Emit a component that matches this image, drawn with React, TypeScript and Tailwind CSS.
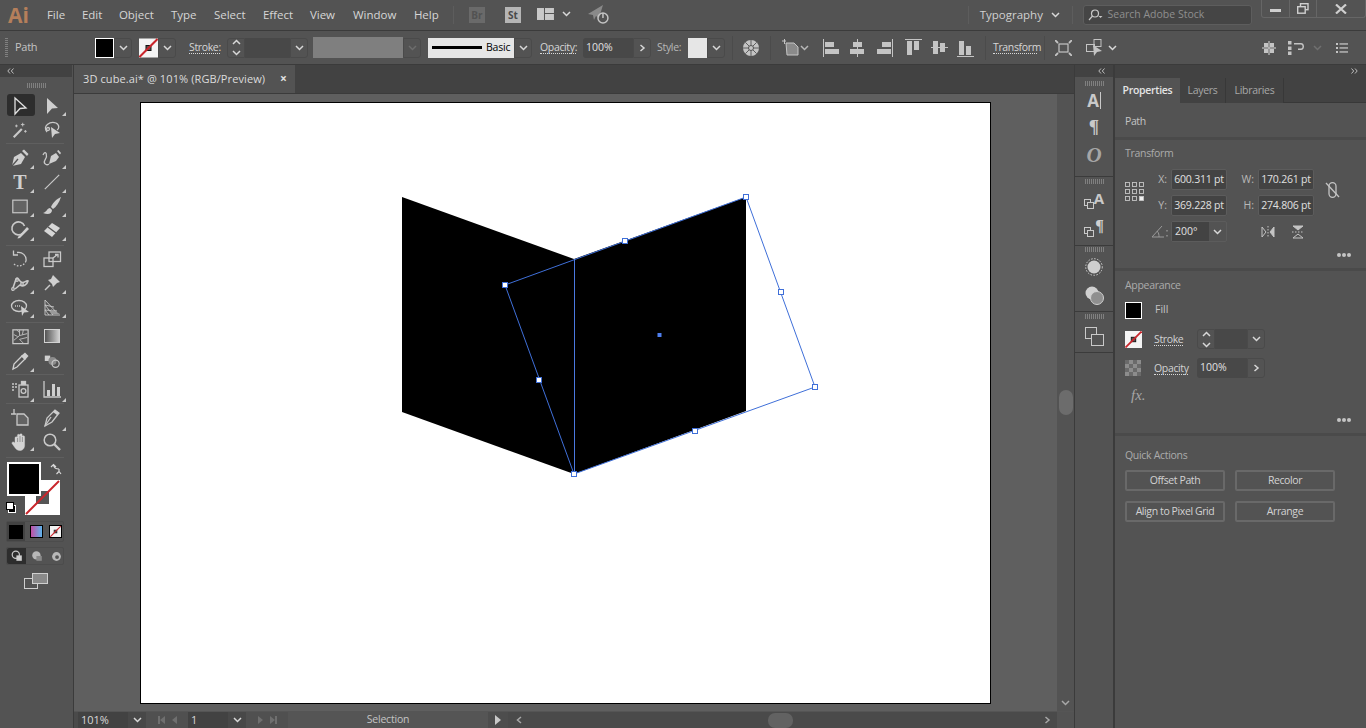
import type { ReactNode } from "react";

const menus = [
  { label: "File", width: "w-[35px]" },
  { label: "Edit", width: "w-[37px]" },
  { label: "Object", width: "w-[52px]" },
  { label: "Type", width: "w-[43px]" },
  { label: "Select", width: "w-[49px]" },
  { label: "Effect", width: "w-[47px]" },
  { label: "View", width: "w-[43px]" },
  { label: "Window", width: "w-[61px]" },
  { label: "Help", width: "w-[40px]" }
];

function Ico({ size = 18, box = 20, className = "", children }: { size?: number; box?: number; className?: string; children: ReactNode }) {
  return (
    <svg width={size} height={size} viewBox={`0 0 ${box} ${box}`} className={`shrink-0 ${className}`} fill="none" stroke="#c9c9c9" strokeWidth="1.3">
      {children}
    </svg>
  );
}

function Chev({ dir = "down", color = "#d8d8d8" }: { dir?: "down" | "up" | "right" | "left"; color?: string }) {
  const points = { down: "1,2 4.5,5.5 8,2", up: "1,6 4.5,2.5 8,6", right: "2.5,1 6,4 2.5,7", left: "6,1 2.5,4 6,7" }[dir];
  return (
    <svg width="9" height="8" viewBox="0 0 9 8" className="shrink-0" fill="none" stroke={color} strokeWidth="1.5">
      <polyline points={points} />
    </svg>
  );
}

function DoubleChev({ dir }: { dir: "left" | "right" }) {
  return (
    <svg width="7" height="6" viewBox="0 0 7 6" fill="none" stroke="#bdbdbd" strokeWidth="1">
      <path d={dir === "left" ? "M3 0.5 L0.8 3 L3 5.5 M6.5 0.5 L4.3 3 L6.5 5.5" : "M0.5 0.5 L2.7 3 L0.5 5.5 M4 0.5 L6.2 3 L4 5.5"} />
    </svg>
  );
}

function ChevBox({ dir = "down", color, className = "" }: { dir?: "down" | "right"; color?: string; className?: string }) {
  return (
    <div className={`flex h-[20px] w-[18px] shrink-0 items-center justify-center rounded-r-[3px] border border-[#4a4a4a] ${className}`}>
      <Chev dir={dir} color={color} />
    </div>
  );
}

function Spinner() {
  return (
    <div className="flex h-[20px] w-[18px] shrink-0 flex-col items-center justify-center gap-[3px] rounded-l-[3px] border border-[#4a4a4a]">
      <Chev dir="up" />
      <Chev dir="down" />
    </div>
  );
}

function NoneSwatch({ className = "" }: { className?: string }) {
  return (
    <svg viewBox="0 0 19 19" className={`shrink-0 ${className}`}>
      <rect width="19" height="19" fill="#f4f4f4" />
      <rect x="7" y="7" width="5" height="5" fill="#555" stroke="#111" />
      <line x1="0.5" y1="18.5" x2="18.5" y2="0.5" stroke="#c9252b" strokeWidth="2" />
    </svg>
  );
}

function Gripper({ className = "" }: { className?: string }) {
  return <div className={`h-[5px] w-[19px] bg-[repeating-linear-gradient(90deg,#808080_0,#808080_1px,transparent_1px,transparent_2px)] ${className}`} />;
}

function Corner() {
  return <span className="absolute right-[2px] bottom-[1px] h-0 w-0 border-b-[4px] border-l-[4px] border-b-[#c9c9c9] border-l-transparent" />;
}

function Tool({ corner = false, active = false, children }: { corner?: boolean; active?: boolean; children: ReactNode }) {
  return (
    <div className="relative flex h-full w-[32px] items-center justify-center">
      {active ? <span className="absolute top-0 left-[3px] h-[22px] w-[28px] rounded-[3px] bg-[#2d2d2d]" /> : null}
      <span className="relative flex items-center justify-center">{children}</span>
      {corner ? <Corner /> : null}
    </div>
  );
}

function ToolRow({ height, children }: { height: string; children: ReactNode }) {
  return <div className={`flex pl-[4px] ${height}`}>{children}</div>;
}

function Sep() {
  return <div className="mx-[6px] h-px w-[58px] bg-[#5f5f5f]" />;
}

function LeftToolbar() {
  return (
    <aside className="flex w-[72px] shrink-0 flex-col bg-[#535353]">
      <div className="flex h-[12px] items-center bg-[#424242] pl-[7px]">
        <DoubleChev dir="left" />
      </div>
      <div className="flex h-[17px] items-center justify-center">
        <Gripper />
      </div>
      <ToolRow height="h-[23px]">
        <Tool active>
          <Ico size={20}><path d="M5 2 L16 12 L10 12.5 L5 18 Z" fill="none" stroke="#e0e0e0" /></Ico>
        </Tool>
        <Tool corner>
          <Ico size={20}><path d="M5 2 L16 12 L10 12.5 L5 18 Z" fill="#cfcfcf" stroke="none" /></Ico>
        </Tool>
      </ToolRow>
      <ToolRow height="h-[26px]">
        <Tool>
          <Ico><path d="M3 18 L12 9" strokeWidth="2.4" /><path d="M13 2v4M11 4h4M6 4v3M4.5 5.5h3M16 10v3M14.5 11.5h3" strokeWidth="1" /></Ico>
        </Tool>
        <Tool>
          <Ico size={20}><path d="M5 12 C0 6 8 1 14 3 C18 5 17 9 15 10" /><circle cx="6" cy="9" r="1.5" /><path d="M9 7 L18 13 L13 14 L10 18 Z" fill="#cfcfcf" stroke="none" /></Ico>
        </Tool>
      </ToolRow>
      <Sep />
      <div className="h-[2px]" />
      <ToolRow height="h-[24px]">
        <Tool corner>
          <Ico size={20}><path d="M2 18 L4 9 L11 5 L15 9 L11 16 Z" fill="#cfcfcf" stroke="none" /><path d="M12 3 L14 1.5 L18.5 6 L17 8 Z" fill="#cfcfcf" stroke="none" /><path d="M2 18 L8 11" stroke="#535353" /></Ico>
        </Tool>
        <Tool corner>
          <Ico size={20}><path d="M1 7 C4 1 6 8 3 12 C1 15 4 18 7 16" /><path d="M7 16 L9 8 L14 5 L17 9 L14 13 Z" fill="#cfcfcf" stroke="none" /><path d="M15 3 L16.5 2 L19 5 L18 6.5 Z" fill="#cfcfcf" stroke="none" /></Ico>
        </Tool>
      </ToolRow>
      <ToolRow height="h-[24px]">
        <Tool corner><span className="font-['Liberation_Serif',serif] text-[20px] leading-none font-bold text-[#cfcfcf]">T</span></Tool>
        <Tool corner><Ico><path d="M2 18 L18 2" strokeWidth="1.3" /></Ico></Tool>
      </ToolRow>
      <ToolRow height="h-[24px]">
        <Tool corner><Ico><rect x="2" y="3.5" width="16" height="14" fill="#636363" /></Ico></Tool>
        <Tool corner>
          <Ico size={20}><path d="M19 1 C14 3 10 8 9 11 L11 13 C14 11 17 7 19 1 Z" fill="#cfcfcf" stroke="none" /><path d="M8 12 C5 12 5 16 1 17 C6 19 10 18 10 14 Z" fill="#cfcfcf" stroke="none" /></Ico>
        </Tool>
      </ToolRow>
      <ToolRow height="h-[24px]">
        <Tool corner><Ico size={20}><path d="M13 13 A 6.5 6.5 0 1 1 14.5 6" strokeWidth="1.6" /><path d="M8 17 L17 7 L19 9 L10 18 L7.5 18.5 Z" fill="#cfcfcf" stroke="none" /></Ico></Tool>
        <Tool corner><Ico size={20}><path d="M2 11 L10 3 L18 8 L10 17 Z" fill="#d6d6d6" stroke="none" /><path d="M6 7 L14 13" stroke="#535353" /></Ico></Tool>
      </ToolRow>
      <div className="h-[3px]" />
      <Sep />
      <ToolRow height="h-[25px]">
        <Tool corner><Ico size={20}><path d="M7 3.5 A 7.5 7.5 0 0 1 16 12" /><path d="M16 12 A 7.5 7.5 0 0 1 3 14" strokeDasharray="1.6 1.6" /><path d="M3.5 1.5 L3.5 6 L8 6" /></Ico></Tool>
        <Tool><Ico size={20}><rect x="2" y="9" width="9" height="8.5" /><rect x="7" y="3" width="11.5" height="9.5" /><path d="M11 9 L15.5 5.5 M13 5.5h3v3" /></Ico></Tool>
      </ToolRow>
      <ToolRow height="h-[24px]">
        <Tool corner><Ico size={20}><path d="M3 15 L6 6 C8 3 9 8 11 9 C14 11 16 7 18 8 C17 12 13 14 10 12 L5 16" strokeWidth="1.6" /><circle cx="7" cy="7" r="1.3" /><circle cx="3" cy="16" r="1.3" /><circle cx="12" cy="11" r="1.3" /></Ico></Tool>
        <Tool corner><Ico size={20}><path d="M11 2 L18 9 L15 10 L11 14 L10 11 L6 7 L9 6 Z" fill="#cfcfcf" stroke="none" /><path d="M8 12 L3 17" strokeWidth="1.5" /></Ico></Tool>
      </ToolRow>
      <ToolRow height="h-[24px]">
        <Tool corner><Ico size={20}><ellipse cx="9" cy="9" rx="7.5" ry="5.5" /><path d="M5 9h6" strokeDasharray="1 1" /><path d="M11 9 L19 15 L14 15.5 L12 19 Z" fill="#cfcfcf" stroke="none" /></Ico></Tool>
        <Tool corner><Ico size={20}><path d="M3 3 V18 H18 M3 3 L16 17 M3 8 L11 18 M3 13 L7 18 M3 8 L12 10 M3 13 L15 14" strokeWidth="0.9" /><path d="M9 12 L18 17 H9 Z" fill="#9a9a9a" stroke="none" /></Ico></Tool>
      </ToolRow>
      <div className="h-[3px]" />
      <Sep />
      <ToolRow height="h-[26px]">
        <Tool><Ico size={19}><rect x="2" y="3" width="16" height="14.5" /><path d="M3 14 L9 9 L9 3 M9 9 L17 7 M6 3 L9 6 M13 3 L12 8 M9 13 L13 17 M9 13 L17 11 M3 8 L7 10" strokeWidth="0.9" /></Ico></Tool>
        <Tool>
          <div className="h-[14px] w-[16px] border border-[#d2d2d2] bg-[linear-gradient(90deg,#545454,#cfcfcf)]" />
        </Tool>
      </ToolRow>
      <ToolRow height="h-[24px]">
        <Tool corner><Ico size={20}><path d="M3 18 L4 13 L12 5 L15 8 L7 16 Z" stroke="#cfcfcf" /><path d="M11 5 L15 1.5 L18.5 5 L15 9 Z" fill="#cfcfcf" stroke="none" /></Ico></Tool>
        <Tool><Ico><rect x="2" y="4" width="6" height="6" fill="#cfcfcf" stroke="none" /><circle cx="10.5" cy="10" r="4.5" fill="#8c8c8c" stroke="none" /><circle cx="14" cy="13" r="4" /></Ico></Tool>
      </ToolRow>
      <div className="h-px" />
      <Sep />
      <ToolRow height="h-[28px]">
        <Tool corner><Ico size={20}><path d="M2 5h2M5 5h2M2 8h2M5 8h2M2 11h2" strokeWidth="1.5" /><rect x="9" y="6" width="9" height="12" /><circle cx="13.5" cy="12" r="2.4" /><rect x="11.5" y="2.5" width="4" height="3" fill="#cfcfcf" /></Ico></Tool>
        <Tool corner><Ico size={20}><path d="M2 2 V18 H19" /><rect x="5" y="11" width="3" height="6" fill="#cfcfcf" stroke="none" /><rect x="10" y="5" width="3" height="12" fill="#cfcfcf" stroke="none" /><rect x="15" y="8" width="3" height="9" fill="#cfcfcf" stroke="none" /></Ico></Tool>
      </ToolRow>
      <Sep />
      <ToolRow height="h-[28px]">
        <Tool><Ico size={20}><path d="M1 6h5M4 1v5" /><path d="M7 6 H14 L18 10 V17 H7 Z" fill="#636363" /></Ico></Tool>
        <Tool corner><Ico size={20}><path d="M3 18 L5 10 L13 2 L17 5 L10 14 Z" /><path d="M3 18 L9 9" /><path d="M13 2 L17 5 L15 7 L11 4 Z" fill="#cfcfcf" stroke="none" /></Ico></Tool>
      </ToolRow>
      <ToolRow height="h-[20px]">
        <Tool corner>
          <Ico size={20}>
            <path d="M5 11 V6 a1.2 1.2 0 0 1 2.4 0 V10 V3.5 a1.2 1.2 0 0 1 2.4 0 V10 V3 a1.2 1.2 0 0 1 2.4 0 V10 V5 a1.2 1.2 0 0 1 2.4 0 V12 C15 16 13 18.5 10 18.5 C7 18.5 6 17 4.5 15 L2 11.5 C1.5 10 3.5 9 5 11 Z" fill="#d4d4d4" stroke="#d4d4d4" strokeWidth="0.4" />
            <path d="M7.6 6 V10 M10 4 V10 M12.4 5 V10" stroke="#535353" strokeWidth="0.5" />
          </Ico>
        </Tool>
        <Tool><Ico size={20}><circle cx="8" cy="8" r="5.8" strokeWidth="1.5" /><path d="M12 12 L18 18" strokeWidth="2.4" /></Ico></Tool>
      </ToolRow>
      <div className="h-[5px]" />
      <Sep />
      <div className="relative h-[58px] w-full">
        <div className="absolute top-[4px] left-[7px] z-10 h-[34px] w-[34px] border-2 border-white bg-black" />
        <svg width="35" height="35" viewBox="0 0 35 35" className="absolute top-[22px] left-[25px]">
          <rect width="35" height="35" fill="#fff" />
          <rect x="11" y="11" width="13" height="13" fill="#555" />
          <line x1="1" y1="34" x2="34" y2="1" stroke="#c9252b" strokeWidth="2" />
        </svg>
        <svg width="12" height="12" viewBox="0 0 12 12" className="absolute top-[5px] left-[50px]" fill="none" stroke="#d8d8d8" strokeWidth="1.2">
          <path d="M1 4 L3.5 1.5 L6 4 M3.5 2 C4 5 6 6 9 6 M6.5 11 L9 8.5 L11 11 M9 9 V6" />
        </svg>
        <div className="absolute top-[47px] left-[8px] h-[8px] w-[8px] border border-white bg-black" />
        <div className="absolute top-[44px] left-[6px] h-[8px] w-[8px] border border-black bg-white" />
      </div>
      <div className="mx-[6px] mt-[5px] flex h-[21px] w-[58px] shrink-0 items-center rounded-[2px] border border-[#4c4c4c]">
        <div className="flex h-full w-[18px] items-center justify-center bg-[#434343]">
          <div className="h-[14px] w-[14px] border border-black bg-black" />
        </div>
        <div className="ml-[5px] h-[13px] w-[13px] border border-black bg-[linear-gradient(90deg,#c34fa5,#5db4ec)]" />
        <NoneSwatch className="ml-[6px] h-[13px] w-[13px] border border-black" />
      </div>
      <div className="mx-[6px] mt-[5px] flex h-[18px] w-[58px] shrink-0 items-center rounded-[2px] border border-[#4c4c4c]">
        <div className="flex h-full w-[19px] items-center justify-center rounded-l-[2px] bg-[#2d2d2d]">
          <Ico size={12}><circle cx="8" cy="8" r="6" strokeWidth="2" /><rect x="9" y="9" width="9" height="9" fill="#cfcfcf" stroke="none" /></Ico>
        </div>
        <div className="ml-[4px] flex w-[14px] justify-center">
          <Ico size={12}><circle cx="9" cy="9" r="7" fill="#b8b8b8" stroke="none" /><rect x="9" y="10" width="9" height="8" fill="#8a8a8a" stroke="none" /></Ico>
        </div>
        <div className="ml-[6px] flex w-[12px] justify-center">
          <Ico size={11}><circle cx="10" cy="10" r="8" fill="#b8b8b8" stroke="none" /><circle cx="11" cy="11" r="3.5" fill="#535353" stroke="none" /></Ico>
        </div>
      </div>
      <div className="mt-[8px] flex justify-center">
        <svg width="24" height="16" viewBox="0 0 24 16" fill="none" stroke="#cfcfcf">
          <rect x="0.5" y="5.5" width="13" height="10" />
          <rect x="8.5" y="0.5" width="15" height="10" fill="#8a8a8a" />
        </svg>
      </div>
    </aside>
  );
}

function MenuBar() {
  return (
    <div className="flex h-[31px] shrink-0 items-center border-b border-[#3b3b3b] bg-[#535353] text-[11.5px] text-[#d6d6d6]">
      <span className="ml-[8px] w-[39px] text-[21px] leading-none font-bold text-[#b57f5b]">Ai</span>
      {menus.map((menu) => (
        <span key={menu.label} className={`${menu.width} shrink-0`}>
          {menu.label}
        </span>
      ))}
      <div className="ml-[-1px] h-[18px] w-px bg-[#5d5d5d]" />
      <div className="ml-[15px] flex h-[16px] w-[16px] items-center justify-center bg-[#6a6a6a] text-[10px] font-bold text-[#525252]">Br</div>
      <div className="ml-[20px] flex h-[16px] w-[16px] items-center justify-center bg-[#b5b5b5] text-[10px] font-bold text-[#4a4a4a]">St</div>
      <svg width="17" height="12" viewBox="0 0 17 12" className="mb-[3px] ml-[16px]" fill="#c9c9c9">
        <rect width="7" height="12" />
        <rect x="8" width="9" height="5" />
        <rect x="8" y="6" width="9" height="6" />
      </svg>
      <div className="mb-[3px] ml-[8px]"><Chev /></div>
      <svg width="22" height="20" viewBox="0 0 22 20" className="ml-[17px]" fill="#8a8a8a">
        <path d="M0 9 L15 0 L11 13 L8 11 L6 15 L5 10 Z" />
        <circle cx="15" cy="13" r="5" fill="none" stroke="#c4c4c4" strokeWidth="1.5" />
        <path d="M15 8 V13" stroke="#c4c4c4" strokeWidth="1.5" />
      </svg>
      <div className="ml-[358px] h-[18px] w-px bg-[#5d5d5d]" />
      <span className="ml-[11px] w-[72px] text-[11.5px] text-[#d0d0d0]">Typography</span>
      <Chev />
      <div className="ml-[12px] h-[18px] w-px bg-[#5d5d5d]" />
      <div className="ml-[10px] flex h-[20px] w-[169px] items-center rounded-[3px] border border-[#5d5d5d] bg-[#454545] pl-[4px] text-[#8f8f8f]">
        <svg width="15" height="12" viewBox="0 0 15 12" fill="none" stroke="#c9c9c9" strokeWidth="1.2" className="shrink-0">
          <circle cx="7" cy="4.5" r="3.5" />
          <path d="M4.5 7 L1 11" />
          <path d="M10.5 7 h4 l-2 2 Z" fill="#c9c9c9" stroke="none" />
        </svg>
        <span className="ml-[4px] text-[10.5px]">Search Adobe Stock</span>
      </div>
      <div className="mb-[12px] ml-[9px] flex h-[18px] w-[105px] shrink-0 rounded-b-[3px] border-x border-b border-[#666]">
        <div className="flex w-[28px] items-center justify-center border-r border-[#666]"><div className="mt-[3px] h-[3px] w-[11px] bg-[#cfcfcf]" /></div>
        <div className="flex w-[27px] items-center justify-center border-r border-[#666]">
          <svg width="12" height="11" viewBox="0 0 12 11" fill="none" stroke="#cfcfcf" strokeWidth="1.4"><rect x="3.5" y="0.7" width="7.5" height="6" /><rect x="0.7" y="3.7" width="7.5" height="6.5" fill="#535353" /></svg>
        </div>
        <div className="flex flex-1 items-center justify-center">
          <svg width="12" height="10" viewBox="0 0 12 10" stroke="#cfcfcf" strokeWidth="2.2"><path d="M1 0.5 L11 9.5 M11 0.5 L1 9.5" /></svg>
        </div>
      </div>
    </div>
  );
}

function Dotted({ className = "", children }: { className?: string; children: ReactNode }) {
  return <span className={`shrink-0 border-b border-dotted border-[#d8d8d8] text-[10.5px] leading-[12px] font-medium tracking-[-0.35px] whitespace-nowrap ${className}`}>{children}</span>;
}

function Bars({ children, className = "" }: { children: ReactNode; className?: string }) {
  return (
    <svg width="17" height="18" viewBox="0 0 17 18" className={`shrink-0 ${className}`} fill="#c4c4c4" stroke="none">
      {children}
    </svg>
  );
}

function ControlBar() {
  return (
    <div className="flex h-[34px] shrink-0 items-center border-b border-[#3b3b3b] bg-[#535353] text-[11px] text-[#d6d6d6]">
      <div className="ml-[5px] h-[19px] w-[3px] bg-[repeating-linear-gradient(0deg,#808080_0,#808080_1px,transparent_1px,transparent_2px)]" />
      <span className="ml-[7px] w-[43px] font-medium tracking-[-0.3px] text-[#c4c4c4]">Path</span>
      <div className="ml-[37px] h-[20px] w-[19px] border border-white bg-black" />
      <ChevBox />
      <NoneSwatch className="ml-[7px] h-[20px] w-[19px]" />
      <ChevBox />
      <Dotted className="ml-[13px] w-[31px]">Stroke:</Dotted>
      <div className="ml-[7px]"><Spinner /></div>
      <div className="h-[20px] w-[45px] bg-[#484848]" />
      <ChevBox />
      <div className="ml-[5px] h-[21px] w-[90px] bg-[#7f7f7f]" />
      <ChevBox color="#6d6d6d" />
      <div className="ml-[7px] flex h-[20px] w-[86px] items-center bg-[#e6e6e6] pl-[4px] text-[10.5px] tracking-[-0.2px] text-black">
        <div className="h-[3px] w-[50px] bg-black" />
        <span className="ml-[4px]">Basic</span>
      </div>
      <ChevBox />
      <Dotted className="ml-[8px] w-[36px]">Opacity:</Dotted>
      <div className="ml-[7px] flex h-[20px] w-[50px] items-center rounded-l-[3px] bg-[#484848] pl-[3px] text-[10.5px] text-[#e0e0e0]">100%</div>
      <ChevBox dir="right" />
      <span className="ml-[6px] w-[24px] text-[10.5px] font-medium tracking-[-0.3px] whitespace-nowrap text-[#b8b8b8]">Style:</span>
      <div className="ml-[7px] h-[20px] w-[19px] bg-[#e6e6e6]" />
      <ChevBox />
      <div className="ml-[7px] h-[24px] w-px bg-[#4b4b4b]" />
      <svg width="16" height="16" viewBox="0 0 16 16" className="ml-[10px] shrink-0" fill="#c4c4c4" stroke="#535353">
        <circle cx="8" cy="8" r="8" stroke="none" />
        <circle cx="8" cy="8" r="2.5" />
        <path d="M8 0V5.5M8 10.5V16M0 8H5.5M10.5 8H16M2.3 2.3L6 6M10 10L13.7 13.7M13.7 2.3L10 6M6 10L2.3 13.7" strokeWidth="0.9" />
      </svg>
      <div className="ml-[11px] h-[24px] w-px bg-[#4b4b4b]" />
      <svg width="18" height="17" viewBox="0 0 18 17" className="ml-[11px] shrink-0" fill="none" stroke="#c4c4c4">
        <path d="M0 2h4M2.5 0v5" />
        <path d="M4 4 H12 L16 8 V16 H5 Z" fill="#8a8a8a" />
      </svg>
      <Chev color="#b8b8b8" />
      <Bars className="ml-[14px]">
        <rect x="0" y="0" width="1" height="18" />
        <rect x="2" y="3" width="9" height="5" />
        <rect x="2" y="10" width="14" height="5" />
      </Bars>
      <Bars className="ml-[9px]">
        <rect x="8" y="0" width="1" height="18" />
        <rect x="4" y="3" width="9" height="5" />
        <rect x="1" y="10" width="14" height="5" />
      </Bars>
      <Bars className="ml-[10px]">
        <rect x="16" y="0" width="1" height="18" />
        <rect x="6" y="3" width="9" height="5" />
        <rect x="1" y="10" width="14" height="5" />
      </Bars>
      <Bars className="ml-[12px]">
        <rect x="0" y="0" width="17" height="1" />
        <rect x="2" y="2" width="5" height="14" />
        <rect x="9" y="2" width="5" height="9" />
      </Bars>
      <Bars className="ml-[9px]">
        <rect x="0" y="8" width="17" height="1" />
        <rect x="2" y="2" width="5" height="13" />
        <rect x="9" y="4" width="5" height="9" />
      </Bars>
      <Bars className="ml-[9px]">
        <rect x="0" y="17" width="17" height="1" />
        <rect x="2" y="2" width="5" height="14" />
        <rect x="9" y="7" width="5" height="9" />
      </Bars>
      <div className="ml-[11px] h-[24px] w-px bg-[#4b4b4b]" />
      <Dotted className="ml-[7px] w-[44px] tracking-[-0.5px]">Transform</Dotted>
      <div className="ml-[7px] h-[24px] w-px bg-[#4b4b4b]" />
      <svg width="17" height="16" viewBox="0 0 17 16" className="ml-[10px] shrink-0" fill="none" stroke="#c4c4c4" strokeWidth="1.2">
        <rect x="4" y="4" width="9" height="8" />
        <path d="M0 0 L3 3 M17 0 L14 3 M0 16 L3 13 M17 16 L14 13" strokeWidth="1.8" />
      </svg>
      <svg width="17" height="17" viewBox="0 0 17 17" className="ml-[14px] shrink-0" fill="none" stroke="#c4c4c4" strokeWidth="1">
        <rect x="8" y="0.5" width="7" height="7" />
        <rect x="0.5" y="5.5" width="8" height="7" />
        <path d="M7 6 L16 12 L11 13 L8 17 Z" fill="#c4c4c4" stroke="none" />
      </svg>
      <div className="ml-[5px]"><Chev /></div>
      <svg width="14" height="14" viewBox="0 0 14 14" className="ml-[145px] shrink-0" fill="#c4c4c4">
        <rect x="2" y="2" width="4" height="4" />
        <rect x="8" y="2" width="4" height="4" />
        <rect x="2" y="8" width="4" height="4" />
        <rect x="8" y="8" width="4" height="4" />
        <rect x="0" y="6.4" width="14" height="1.2" />
        <rect x="6.4" y="0" width="1.2" height="14" />
      </svg>
      <svg width="18" height="14" viewBox="0 0 18 14" className="ml-[12px] shrink-0" fill="#c4c4c4">
        <rect y="0" width="3.5" height="3.5" />
        <rect y="5.5" width="3.5" height="3.5" />
        <rect y="10.5" width="3.5" height="3.5" />
        <path d="M6 2 H13 C17 2 17 9 13 9 H10 V7.5 H13 C15 7.5 15 3.5 13 3.5 H6 Z" />
      </svg>
      <div className="ml-[7px]"><Chev color="#707070" /></div>
      <svg width="12" height="10" viewBox="0 0 12 10" className="ml-[14px] shrink-0" fill="#c4c4c4">
        <rect y="0" width="2" height="2" />
        <rect y="4" width="2" height="2" />
        <rect y="8" width="2" height="2" />
        <rect x="3.5" y="0.3" width="8.5" height="1.3" />
        <rect x="3.5" y="4.3" width="8.5" height="1.3" />
        <rect x="3.5" y="8.3" width="8.5" height="1.3" />
      </svg>
    </div>
  );
}

const handles = [
  [505, 285],
  [625, 241],
  [746, 197],
  [781, 292],
  [815, 387],
  [695, 431],
  [574, 474],
  [539, 380]
];

function Canvas() {
  return (
    <div className="relative flex-1 overflow-hidden bg-[#5f5f5f]">
      {/* artboard sits on a free canvas, coords below are page coords */}
      <div className="absolute top-[8px] left-[66px] h-[602px] w-[851px] border border-black bg-white">
        <svg width="851" height="602" viewBox="140 102 851 602" className="absolute top-[-1px] left-[-1px]">
          <polygon points="402,197 574,259 574,474 402,412" fill="#000" />
          <polygon points="574,259 746,197 746,411 574,474" fill="#000" />
          <polygon points="505,285 746,197 815,387 574,474" fill="none" stroke="#3f6fd8" strokeWidth="1" />
          <line x1="574.5" y1="259" x2="574.5" y2="474" stroke="#4a78e0" shapeRendering="crispEdges" />
          {handles.map(([x, y]) => (
            <rect key={`${x}-${y}`} x={x - 2.5} y={y - 2.5} width="5" height="5" fill="#fff" stroke="#3f6fd8" />
          ))}
          <rect x="657.5" y="333" width="4" height="4" fill="#4f7fee" />
        </svg>
      </div>
    </div>
  );
}

function VerticalScroll() {
  return (
    <div className="flex w-[17px] shrink-0 flex-col items-center bg-[#535353]">
      <div className="h-[296px]" />
      <div className="h-[25px] w-[14px] rounded-[7px] bg-[#6c6c6c]" />
      <div className="flex-1" />
      <div className="flex h-[16px] items-center justify-center"><Chev color="#a8a8a8" /></div>
    </div>
  );
}

function StatusBar() {
  return (
    <div className="flex h-[17px] shrink-0 items-center border-t border-[#555] bg-[#4a4a4a] pl-[4px] text-[11px] text-[#d8d8d8]">
      <div className="flex h-full w-[50px] items-center bg-[#424242] pl-[3px]">101%</div>
      <div className="flex h-full w-[18px] items-center justify-center bg-[#484848]"><Chev /></div>
      <div className="flex h-full w-[42px] items-center justify-center gap-[7px] bg-[#505050]">
        <span className="flex items-center">
          <span className="h-[8px] w-[2px] bg-[#6f6f6f]" />
          <span className="h-0 w-0 border-y-[4px] border-r-[5px] border-y-transparent border-r-[#6f6f6f]" />
        </span>
        <span className="h-0 w-0 border-y-[4px] border-r-[5px] border-y-transparent border-r-[#6f6f6f]" />
      </div>
      <div className="flex h-full w-[40px] items-center bg-[#424242] pl-[3px]">1</div>
      <div className="flex h-full w-[18px] items-center justify-center bg-[#484848]"><Chev /></div>
      <div className="flex h-full w-[42px] items-center justify-center gap-[7px] bg-[#505050]">
        <span className="h-0 w-0 border-y-[4px] border-l-[5px] border-y-transparent border-l-[#6f6f6f]" />
        <span className="flex items-center">
          <span className="h-0 w-0 border-y-[4px] border-l-[5px] border-y-transparent border-l-[#6f6f6f]" />
          <span className="h-[8px] w-[2px] bg-[#6f6f6f]" />
        </span>
      </div>
      <div className="flex h-full w-[200px] items-center justify-center bg-[#555] text-[10.5px] tracking-[-0.2px] text-[#c4c4c4]">Selection</div>
      <div className="flex h-full w-[20px] items-center justify-center bg-[#4d4d4d]">
        <span className="h-0 w-0 border-y-[5px] border-l-[6px] border-y-transparent border-l-[#c9c9c9]" />
      </div>
      <div className="flex h-full flex-1 items-center bg-[#4a4a4a] pr-[5px] pl-[7px]">
        <Chev dir="left" color="#a8a8a8" />
        <div className="ml-[244px] h-[15px] w-[25px] rounded-[7px] bg-[#626262]" />
        <div className="flex-1" />
        <Chev dir="right" color="#a8a8a8" />
      </div>
      <div className="h-full w-[17px] shrink-0 bg-[#535353]" />
    </div>
  );
}

function DockIcon({ height, children }: { height: string; children: ReactNode }) {
  return <div className={`flex items-center justify-center ${height}`}>{children}</div>;
}

function RightDock() {
  return (
    <aside className="flex w-[39px] shrink-0 flex-col border-r border-[#3b3b3b] bg-[#535353] text-[#c9c9c9]">
      <div className="flex h-[12px] items-center justify-end bg-[#424242] pr-[8px]"><DoubleChev dir="left" /></div>
      <div className="flex h-[12px] items-center justify-center"><Gripper /></div>
      <DockIcon height="h-[23px]">
        <span className="text-[17px] leading-none font-bold">A</span>
        <span className="ml-[1px] h-[17px] w-px bg-[#c9c9c9]" />
      </DockIcon>
      <DockIcon height="h-[29px]"><span className="font-['Liberation_Serif',serif] text-[19px] leading-none font-bold">¶</span></DockIcon>
      <DockIcon height="h-[28px]"><span className="font-['Liberation_Serif',serif] text-[21px] leading-none font-bold text-[#a6a6a6] italic">O</span></DockIcon>
      <div className="mt-[7px] h-px bg-[#3b3b3b]" />
      <div className="flex h-[9px] items-center justify-center"><Gripper /></div>
      <DockIcon height="h-[28px]">
        <svg width="11" height="11" viewBox="0 0 11 11" className="mt-[8px] mr-[-1px]" fill="none" stroke="#c9c9c9"><rect x="0.5" y="0.5" width="6" height="6" /><rect x="3.5" y="3.5" width="6" height="6" fill="#535353" /></svg>
        <span className="mb-[3px] text-[15px] leading-none font-bold">A</span>
      </DockIcon>
      <DockIcon height="h-[28px]">
        <svg width="11" height="11" viewBox="0 0 11 11" className="mt-[8px]" fill="none" stroke="#c9c9c9"><rect x="0.5" y="0.5" width="6" height="6" /><rect x="3.5" y="3.5" width="6" height="6" fill="#535353" /></svg>
        <span className="mb-[4px] font-['Liberation_Serif',serif] text-[16px] leading-none font-bold text-[#d0d0d0]">¶</span>
      </DockIcon>
      <div className="mt-[3px] h-px bg-[#3b3b3b]" />
      <div className="flex h-[7px] items-center justify-center"><Gripper /></div>
      <DockIcon height="h-[27px]">
        <svg width="18" height="18" viewBox="0 0 18 18"><circle cx="9" cy="9" r="6.5" fill="#cfcfcf" /><circle cx="9" cy="9" r="8.3" fill="none" stroke="#cfcfcf" strokeDasharray="1.5 1.5" /></svg>
      </DockIcon>
      <DockIcon height="h-[31px]">
        <svg width="19" height="19" viewBox="0 0 19 19"><circle cx="7" cy="7" r="6.5" fill="#d0d0d0" /><circle cx="12" cy="12" r="6.5" fill="#8f8f8f" stroke="#d0d0d0" /></svg>
      </DockIcon>
      <div className="h-px bg-[#3b3b3b]" />
      <div className="flex h-[9px] items-center justify-center"><Gripper /></div>
      <DockIcon height="h-[31px]">
        <svg width="19" height="19" viewBox="0 0 19 19" fill="none" stroke="#c9c9c9"><rect x="0.5" y="0.5" width="11" height="11" /><rect x="6.5" y="7.5" width="12" height="11" fill="#535353" /></svg>
      </DockIcon>
      <div className="h-px bg-[#3b3b3b]" />
    </aside>
  );
}

function SectionDivider() {
  return <div className="h-[3px] bg-[#4a4a4a]" />;
}

function Field({ label, value }: { label: string; value: string }) {
  return (
    <div className="flex items-center">
      <span className="w-[20px] pr-[4px] text-right text-[10.5px] font-medium text-[#b8b8b8]">{label}</span>
      <div className="flex h-[21px] w-[56px] items-center justify-center rounded-[2px] border border-[#5c5c5c] bg-[#434343] text-[10.5px] tracking-[-0.2px] text-[#e0e0e0]">{value}</div>
    </div>
  );
}

function ActionButton({ children }: { children: ReactNode }) {
  return <div className="flex h-[21px] w-[100px] items-center justify-center rounded-[2px] border-2 border-[#696969] text-[10.5px] font-medium tracking-[-0.4px] text-[#d2d2d2]">{children}</div>;
}

function More() {
  return (
    <div className="flex justify-end gap-[1px] pr-[15px]">
      <span className="h-[4px] w-[4px] rounded-full bg-[#c4c4c4]" />
      <span className="h-[4px] w-[4px] rounded-full bg-[#c4c4c4]" />
      <span className="h-[4px] w-[4px] rounded-full bg-[#c4c4c4]" />
    </div>
  );
}

function PropertiesPanel() {
  return (
    <aside className="flex min-w-0 flex-1 flex-col border-l border-[#3b3b3b] bg-[#535353] text-[#c4c4c4]">
      <div className="flex h-[12px] shrink-0 items-center justify-end bg-[#424242] pr-[8px]"><DoubleChev dir="right" /></div>
      <div className="flex h-[26px] shrink-0 bg-[#424242] pt-[1px] text-[10.5px] font-medium tracking-[-0.3px]">
        <div className="flex w-[65px] items-center justify-center bg-[#535353] font-semibold text-[#e4e4e4]">Properties</div>
        <div className="flex w-[46px] items-center justify-center border-r border-[#383838] text-[#a8a8a8]">Layers</div>
        <div className="flex w-[58px] items-center justify-center border-r border-[#383838] text-[#a8a8a8]">Libraries</div>
        <div className="flex-1 border-b border-[#383838]" />
      </div>
      <div className="flex h-[34px] shrink-0 items-center pt-[3px] pl-[10px] text-[10.5px] font-medium tracking-[-0.4px]">Path</div>
      <SectionDivider />
      <div className="h-[128px] shrink-0 pl-[10px]">
        <div className="flex h-[29px] items-center pb-[2px] text-[10.5px] font-medium tracking-[-0.3px] text-[#ababab]">Transform</div>
        <div className="flex">
          <svg width="19" height="19" viewBox="0 0 19 19" className="mt-[13px] shrink-0" fill="none" stroke="#c4c4c4" strokeWidth="0.9">
            <rect x="0.5" y="0.5" width="4" height="4" /><rect x="7.5" y="0.5" width="4" height="4" /><rect x="14.5" y="0.5" width="4" height="4" />
            <rect x="0.5" y="7.5" width="4" height="4" /><rect x="7.5" y="7.5" width="4" height="4" /><rect x="14.5" y="7.5" width="4" height="4" />
            <rect x="0.5" y="14.5" width="4" height="4" /><rect x="7.5" y="14.5" width="4" height="4" /><rect x="14.5" y="14.5" width="4" height="4" fill="#f0f0f0" />
          </svg>
          <div className="ml-[7px] flex flex-col gap-[5px]">
            <div className="flex gap-[11px]">
              <Field label="X:" value="600.311 pt" />
              <Field label="W:" value="170.261 pt" />
            </div>
            <div className="flex gap-[11px]">
              <Field label="Y:" value="369.228 pt" />
              <Field label="H:" value="274.806 pt" />
            </div>
            <div className="flex items-center">
              <svg width="20" height="14" viewBox="0 0 20 14" className="shrink-0" fill="none" stroke="#9a9a9a">
                <path d="M11 1 L1 12 H13 M6 6 C8 8 8 10 8 12" />
                <path d="M16 5 v1.5 M16 10 v1.5" strokeWidth="1.3" />
              </svg>
              <div className="flex h-[21px] w-[56px] items-center rounded-[2px] border border-[#5c5c5c] text-[10.5px] text-[#e0e0e0]">
                <span className="flex h-full w-[37px] items-center bg-[#434343] pl-[3px]">200°</span>
                <span className="flex flex-1 items-center justify-center"><Chev /></span>
              </div>
              <svg width="14" height="12" viewBox="0 0 14 12" className="ml-[34px]" fill="none" stroke="#c4c4c4">
                <path d="M1 1 L5 6 L1 11 Z" />
                <path d="M13 1 L9 6 L13 11 Z" fill="#c4c4c4" />
                <path d="M7 0 V12" strokeDasharray="1.5 1.5" />
              </svg>
              <svg width="12" height="14" viewBox="0 0 12 14" className="ml-[17px]" fill="none" stroke="#c4c4c4">
                <path d="M1 1 H11 L6 5 Z" fill="#c4c4c4" />
                <path d="M1 13 H11 L6 9 Z" />
                <path d="M0 7 H12" strokeDasharray="1.5 1.5" />
              </svg>
            </div>
          </div>
          <svg width="15" height="16" viewBox="0 0 15 16" className="mt-[13px] ml-[11px] shrink-0" fill="none" stroke="#c4c4c4" strokeWidth="1.3">
            <rect x="4" y="0.7" width="7" height="14.6" rx="3.5" />
            <path d="M1 1 L14 15" />
          </svg>
        </div>
        <div className="mt-[11px]"><More /></div>
      </div>
      <SectionDivider />
      <div className="h-[162px] shrink-0 pl-[10px]">
        <div className="flex h-[29px] items-center text-[10.5px] font-medium tracking-[-0.3px] text-[#ababab]">Appearance</div>
        <div className="mt-[1px] flex h-[18px] items-center">
          <div className="h-[17px] w-[17px] border border-white bg-black" />
          <span className="ml-[13px] text-[10.5px] font-medium">Fill</span>
        </div>
        <div className="mt-[10px] flex h-[20px] items-center">
          <NoneSwatch className="h-[17px] w-[17px]" />
          <Dotted className="ml-[12px] w-[29px] text-[#d2d2d2]">Stroke</Dotted>
          <div className="ml-[14px]"><Spinner /></div>
          <div className="h-[20px] w-[32px] bg-[#484848]" />
          <ChevBox />
        </div>
        <div className="mt-[9px] flex h-[20px] items-center">
          <div className="h-[16px] w-[16px] bg-[conic-gradient(#8c8c8c_25%,#6a6a6a_0_50%,#8c8c8c_0_75%,#6a6a6a_0)] bg-[length:8px_8px]" />
          <Dotted className="ml-[13px] w-[34px] text-[#d2d2d2]">Opacity</Dotted>
          <div className="ml-[9px] flex h-[20px] w-[50px] items-center rounded-l-[3px] bg-[#484848] pl-[3px] text-[10.5px] text-[#e0e0e0]">100%</div>
          <ChevBox dir="right" />
        </div>
        <div className="mt-[6px] pl-[6px] font-['Liberation_Serif',serif] text-[15px] leading-[22px] text-[#a6a6a6] italic">fx.</div>
        <div className="mt-[12px]"><More /></div>
      </div>
      <SectionDivider />
      <div className="pl-[10px]">
        <div className="flex h-[30px] items-end pb-[2px] text-[10.5px] font-medium tracking-[-0.3px] text-[#ababab]">Quick Actions</div>
        <div className="mt-[4px] flex gap-[10px]">
          <ActionButton>Offset Path</ActionButton>
          <ActionButton>Recolor</ActionButton>
        </div>
        <div className="mt-[10px] flex gap-[10px]">
          <ActionButton>Align to Pixel Grid</ActionButton>
          <ActionButton>Arrange</ActionButton>
        </div>
      </div>
    </aside>
  );
}

export default function App() {
  return (
    <div className="flex h-[728px] w-[1366px] flex-col overflow-hidden bg-[#535353] font-['Open_Sans','Noto_Sans',sans-serif]">
      <MenuBar />
      <ControlBar />
      <div className="flex min-h-0 flex-1">
        <LeftToolbar />
        <div className="ml-[1px] flex w-[1002px] shrink-0 flex-col border-x border-[#3b3b3b]">
          <div className="flex h-[29px] shrink-0 border-b border-[#3b3b3b] bg-[#424242] text-[11px] text-[#dcdcdc]">
            <div className="flex w-[221px] items-center bg-[#535353] pl-[9px]">
              <span className="w-[197px] font-medium tracking-[0.1px] whitespace-nowrap">3D cube.ai* @ 101% (RGB/Preview)</span>
              <span className="text-[12px] font-bold text-[#e0e0e0]">×</span>
            </div>
          </div>
          <div className="flex min-h-0 flex-1">
            <Canvas />
            <VerticalScroll />
          </div>
          <StatusBar />
        </div>
        <RightDock />
        <PropertiesPanel />
      </div>
    </div>
  );
}
